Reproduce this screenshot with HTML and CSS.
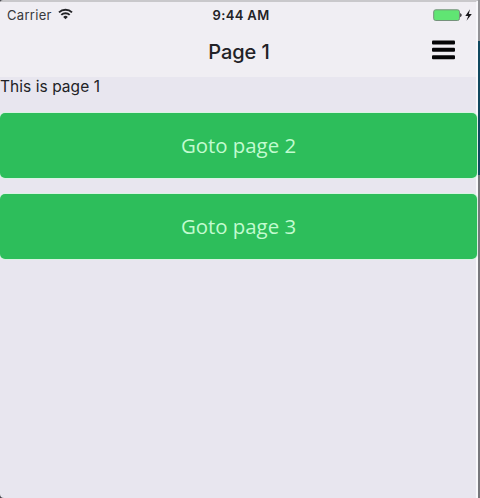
FILE: index.html
```html
<!DOCTYPE html>
<html lang="en">
<head>
<meta charset="utf-8">
<title>Page 1</title>
<link rel="stylesheet" href="styles.css">
</head>
<body>
<div class="stage">
  <div class="phone">
    <header class="header">
      <div class="status">
        <div class="carrier">
          <span>Carrier</span>
          <svg class="wifi" width="15" height="12" viewBox="0 0 15 12" fill="none" stroke="#222225" stroke-width="1.9">
            <path d="M1 4.4a9.3 9.3 0 0 1 13 0M3.3 6.9a6 6 0 0 1 8.4 0"/>
            <path d="M7.5 11.2 5.2 8.9a3.3 3.3 0 0 1 4.6 0z" fill="#222225" stroke="none"/>
          </svg>
        </div>
        <div class="time">9:44 AM</div>
        <svg class="battery" width="40" height="14" viewBox="0 0 40 14">
          <rect x=".7" y="1.8" width="25.8" height="10.7" rx="2" fill="#60e573" stroke="#75917b" stroke-width="1"/>
          <path d="M27.2 5q3 2.1 0 4.2z" fill="#222225"/>
          <path d="M37 1.2 32.3 8h2.9l-1.7 4.7L38.8 6h-3z" fill="#17171a"/>
        </svg>
      </div>
      <div class="navbar">
        <h1 class="title">Page 1</h1>
        <svg class="menu" width="23" height="20" viewBox="0 0 23 20">
          <g fill="#050507"><rect width="23" height="4" y=".4" rx="1"/><rect width="23" height="4" y="7.8" rx="1"/><rect width="23" height="4" y="15.2" rx="1"/></g>
        </svg>
      </div>
    </header>
    <main class="content">
      <p class="intro">This is page 1</p>
      <button class="button">Goto page 2</button>
      <button class="button">Goto page 3</button>
    </main>
  </div>
  <div class="edge"><div class="edge-top"></div><div class="edge-blue"></div></div>
</div>
</body>
</html>
```
FILE: styles.css
```css
* { box-sizing: border-box; }
body { margin: 0; font-family: Inter, "Liberation Sans", sans-serif; color: #222226; }
.stage { display: flex; width: 480px; height: 498px; overflow: hidden; background: #44444a; }
.phone {
  width: 478px;
  background: #e8e6ef;
  border-top: 2px solid #c9c8cb;
  border-right: 2px solid #f8f8fb;
  border-radius: 3px 0 0 4px;
}
.header { height: 75px; background: #f0eef3; }
.status {
  display: grid;
  grid-template-columns: 1fr auto 1fr;
  align-items: center;
  height: 26px;
  padding: 0 3px 0 7px;
}
.carrier { display: flex; align-items: center; gap: 6px; font-size: 13px; letter-spacing: .3px; color: #38383c; }
.wifi { margin-top: -3px; }
.time { font-size: 13px; font-weight: 600; letter-spacing: .35px; margin-left: 2px; }
.battery { justify-self: end; }
.navbar { display: grid; grid-template-columns: 1fr auto 1fr; align-items: center; height: 46px; padding: 0 21px 0 23px; }
.title { grid-column: 2; margin: 1px 0 0; font-size: 20px; font-weight: 500; line-height: 24px; letter-spacing: -.05px; }
.menu { justify-self: end; margin-top: -3px; }
.content { display: flex; flex-direction: column; }
.intro { margin: 0 0 16px; height: 20px; font-size: 15.5px; line-height: 20px; letter-spacing: .05px; }
.button {
  height: 65px;
  margin: 0 -1px 16px 0;
  padding: 0 0 1px;
  border: 0;
  border-radius: 5px;
  background: #2dbe5b;
  color: #c2fbd0;
  font: 20.4px "Open Sans", "Noto Sans", sans-serif;
  box-shadow: 0 0 0 1px #d9f3e3;
}
.edge { display: flex; flex-direction: column; width: 2px; background: #77777c; }
.edge-top { height: 41px; background: #939397; }
.edge-blue { height: 134px; background: #11485f; }
```
